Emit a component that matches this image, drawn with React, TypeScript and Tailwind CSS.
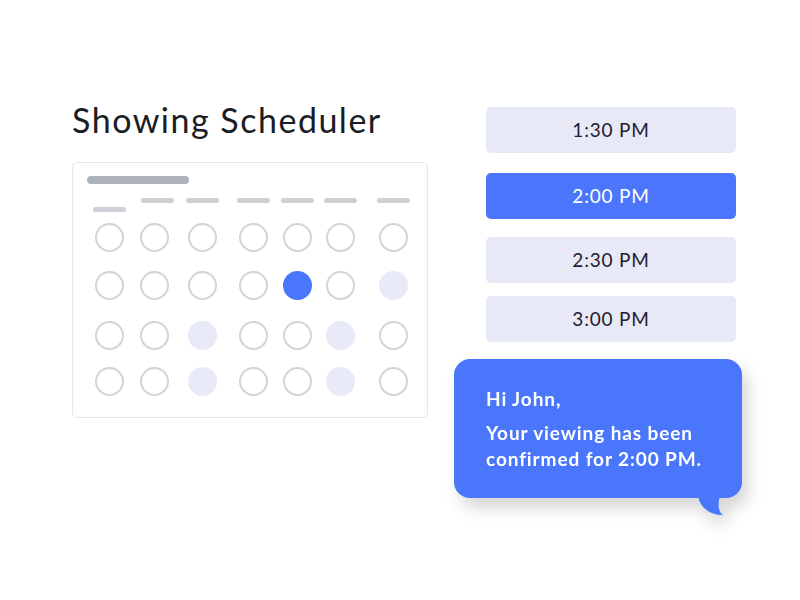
import React from "react";

type Cell = "o" | "b" | "l";

const rows: Cell[][] = [
  ["o", "o", "o", "o", "o", "o", "o"],
  ["o", "o", "o", "o", "b", "o", "l"],
  ["o", "o", "l", "o", "o", "l", "o"],
  ["o", "o", "l", "o", "o", "l", "o"],
];

const colMargins = ["ml-[20px]", "ml-[12px]", "ml-[15px]", "ml-[18px]", "ml-[11px]", "ml-[10px]", "ml-[20px]"];
const rowMargins = ["mt-0", "mt-[19px]", "mt-[21px]", "mt-[17px]"];

function Circle({ kind }: { kind: Cell }) {
  if (kind === "b") return <div className="w-[29px] h-[29px] rounded-full bg-[#4a76fb]" />;
  if (kind === "l") return <div className="w-[29px] h-[29px] rounded-full bg-[#e9eaf7]" />;
  return <div className="w-[29px] h-[29px] rounded-full border-[2.5px] border-[#d3d4d7] bg-white" />;
}

function Slot({ label, active, className }: { label: string; active?: boolean; className?: string }) {
  return (
    <div
      className={`h-[46px] w-[250px] rounded-[5px] flex items-center justify-center text-[19px] tracking-[0.8px] ${
        active ? "bg-[#4b76fb] text-white" : "bg-[#e8e9f6] text-[#1d2132]"
      } ${className ?? ""}`}
    >
      {label}
    </div>
  );
}

export default function App() {
  return (
    <div
      className="w-[800px] h-[600px] bg-white flex"
      style={{ fontFamily: "Lato, 'Noto Sans', sans-serif" }}
    >
      {/* Left column */}
      <div className="ml-[72px] mt-[103px] flex flex-col">
        <h1 className="text-[34px] leading-none text-[#1b1d24] tracking-[1.5px]">Showing Scheduler</h1>
        <div className="mt-[25px] w-[356px] h-[256px] border border-[#e5e7ea] rounded-[5px] pt-[13px] pl-[14px]">
          <div className="w-[102px] h-2 rounded-full bg-[#aeb3bb]" />
          <div className="flex mt-[14px] -ml-[14px]">
            {colMargins.map((m, ci) => (
              <div key={ci} className={`${m} w-[33px] flex flex-col items-center`}>
                <div className="h-[25px] w-full">
                  <div
                    className={`h-[5px] w-[33px] rounded-full bg-[#cdd0d5] ${
                      ci === 0 ? "mt-[9px]" : ci === 1 ? "ml-[3px]" : ""
                    }`}
                  />
                </div>
                {rows.map((r, ri) => (
                  <div key={ri} className={rowMargins[ri]}>
                    <Circle kind={r[ci]} />
                  </div>
                ))}
              </div>
            ))}
          </div>
        </div>
      </div>

      {/* Right column */}
      <div className="ml-[58px] mt-[107px] flex flex-col">
        <Slot label="1:30 PM" />
        <Slot label="2:00 PM" active className="mt-[20px]" />
        <Slot label="2:30 PM" className="mt-[18px]" />
        <Slot label="3:00 PM" className="mt-[13px]" />

        <div className="relative -ml-[32px] mt-[17px] w-[288px] drop-shadow-[6px_10px_8px_rgba(0,0,0,0.16)]">
          <div className="h-[139px] rounded-[16px] bg-[#4a76fb] pt-[27px] pl-[32px] text-white text-[19px] leading-[26px] font-bold tracking-[0.9px]">
            <p>Hi John,</p>
            <p className="mt-[8px]">
              Your viewing has been
              <br />
              confirmed for 2:00 PM.
            </p>
          </div>
          <svg
            className="absolute left-[240px] top-[131px]"
            width="32"
            height="28"
            viewBox="0 0 32 28"
          >
            <path d="M3,0 L4,6 C6,18 16,25 29,25 C25,22 23,16 26,6 L27,0 Z" fill="#4a76fb" />
          </svg>
        </div>
      </div>
    </div>
  );
}
